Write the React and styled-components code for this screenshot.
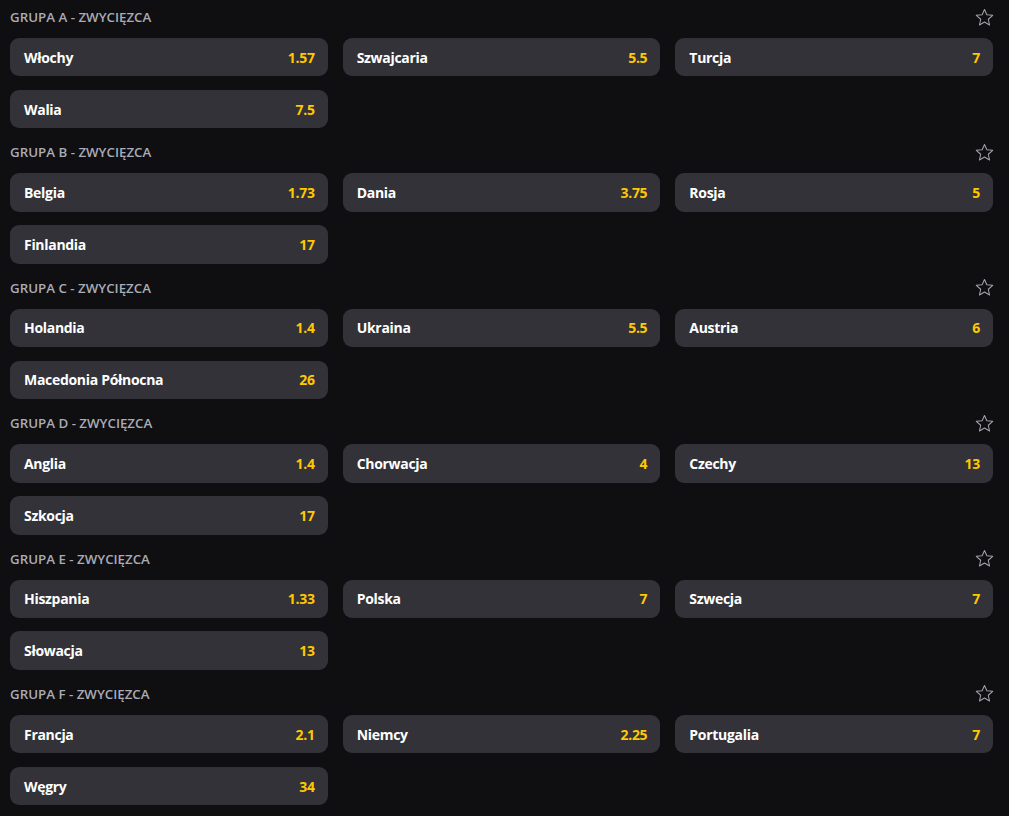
import styled, { createGlobalStyle } from "styled-components";

const GlobalStyle = createGlobalStyle`
  body {
    margin: 0;
    background: #0f0e11;
    font-family: "Open Sans", "Noto Sans", sans-serif;
  }
`;

const groups = [
  {
    name: "GRUPA A - ZWYCIĘZCA",
    odds: [
      ["Włochy", "1.57"],
      ["Szwajcaria", "5.5"],
      ["Turcja", "7"],
      ["Walia", "7.5"],
    ],
  },
  {
    name: "GRUPA B - ZWYCIĘZCA",
    odds: [
      ["Belgia", "1.73"],
      ["Dania", "3.75"],
      ["Rosja", "5"],
      ["Finlandia", "17"],
    ],
  },
  {
    name: "GRUPA C - ZWYCIĘZCA",
    odds: [
      ["Holandia", "1.4"],
      ["Ukraina", "5.5"],
      ["Austria", "6"],
      ["Macedonia Północna", "26"],
    ],
  },
  {
    name: "GRUPA D - ZWYCIĘZCA",
    odds: [
      ["Anglia", "1.4"],
      ["Chorwacja", "4"],
      ["Czechy", "13"],
      ["Szkocja", "17"],
    ],
  },
  {
    name: "GRUPA E - ZWYCIĘZCA",
    odds: [
      ["Hiszpania", "1.33"],
      ["Polska", "7"],
      ["Szwecja", "7"],
      ["Słowacja", "13"],
    ],
  },
  {
    name: "GRUPA F - ZWYCIĘZCA",
    odds: [
      ["Francja", "2.1"],
      ["Niemcy", "2.25"],
      ["Portugalia", "7"],
      ["Węgry", "34"],
    ],
  },
];

const Page = styled.div`
  padding: 0 16px 0 10px;
`;

const Group = styled.section`
  margin-bottom: 7px;
`;

const GroupHeader = styled.div`
  height: 34px;
  margin-bottom: 4px;
  display: flex;
  align-items: center;
  justify-content: space-between;
`;

const GroupTitle = styled.span`
  font-size: 13.3px;
  font-weight: 600;
  color: #a9abb5;
`;

const StarButton = styled.span`
  display: flex;
  width: 19px;
  height: 19px;
  margin-right: -1px;
  color: #a3a3a8;
`;

const Grid = styled.div`
  display: grid;
  grid-template-columns: repeat(3, 1fr);
  column-gap: 15px;
  row-gap: 13.6px;
`;

const OddButton = styled.div`
  height: 38.4px;
  box-sizing: border-box;
  padding: 0 13px 0 14px;
  border-radius: 9px;
  background: #323238;
  display: flex;
  align-items: center;
  justify-content: space-between;
  font-size: 14px;
  font-weight: 700;
`;

const Team = styled.span`
  color: #ffffff;
  letter-spacing: -0.3px;
`;

const Price = styled.span`
  color: #ffc800;
  letter-spacing: -0.3px;
`;

function Star() {
  return (
    <svg viewBox="0 0 24 24" width="19" height="19" fill="none" stroke="currentColor" strokeWidth="1.3" strokeLinejoin="round">
      <polygon points="12,1.8 15,8.6 22.4,9.3 16.8,14.2 18.4,21.5 12,17.7 5.6,21.5 7.2,14.2 1.6,9.3 9,8.6" />
    </svg>
  );
}

export default function App() {
  return (
    <Page>
      <GlobalStyle />
      {groups.map((group) => (
        <Group key={group.name}>
          <GroupHeader>
            <GroupTitle>{group.name}</GroupTitle>
            <StarButton>
              <Star />
            </StarButton>
          </GroupHeader>
          <Grid>
            {group.odds.map(([team, price]) => (
              <OddButton key={team}>
                <Team>{team}</Team>
                <Price>{price}</Price>
              </OddButton>
            ))}
          </Grid>
        </Group>
      ))}
    </Page>
  );
}
